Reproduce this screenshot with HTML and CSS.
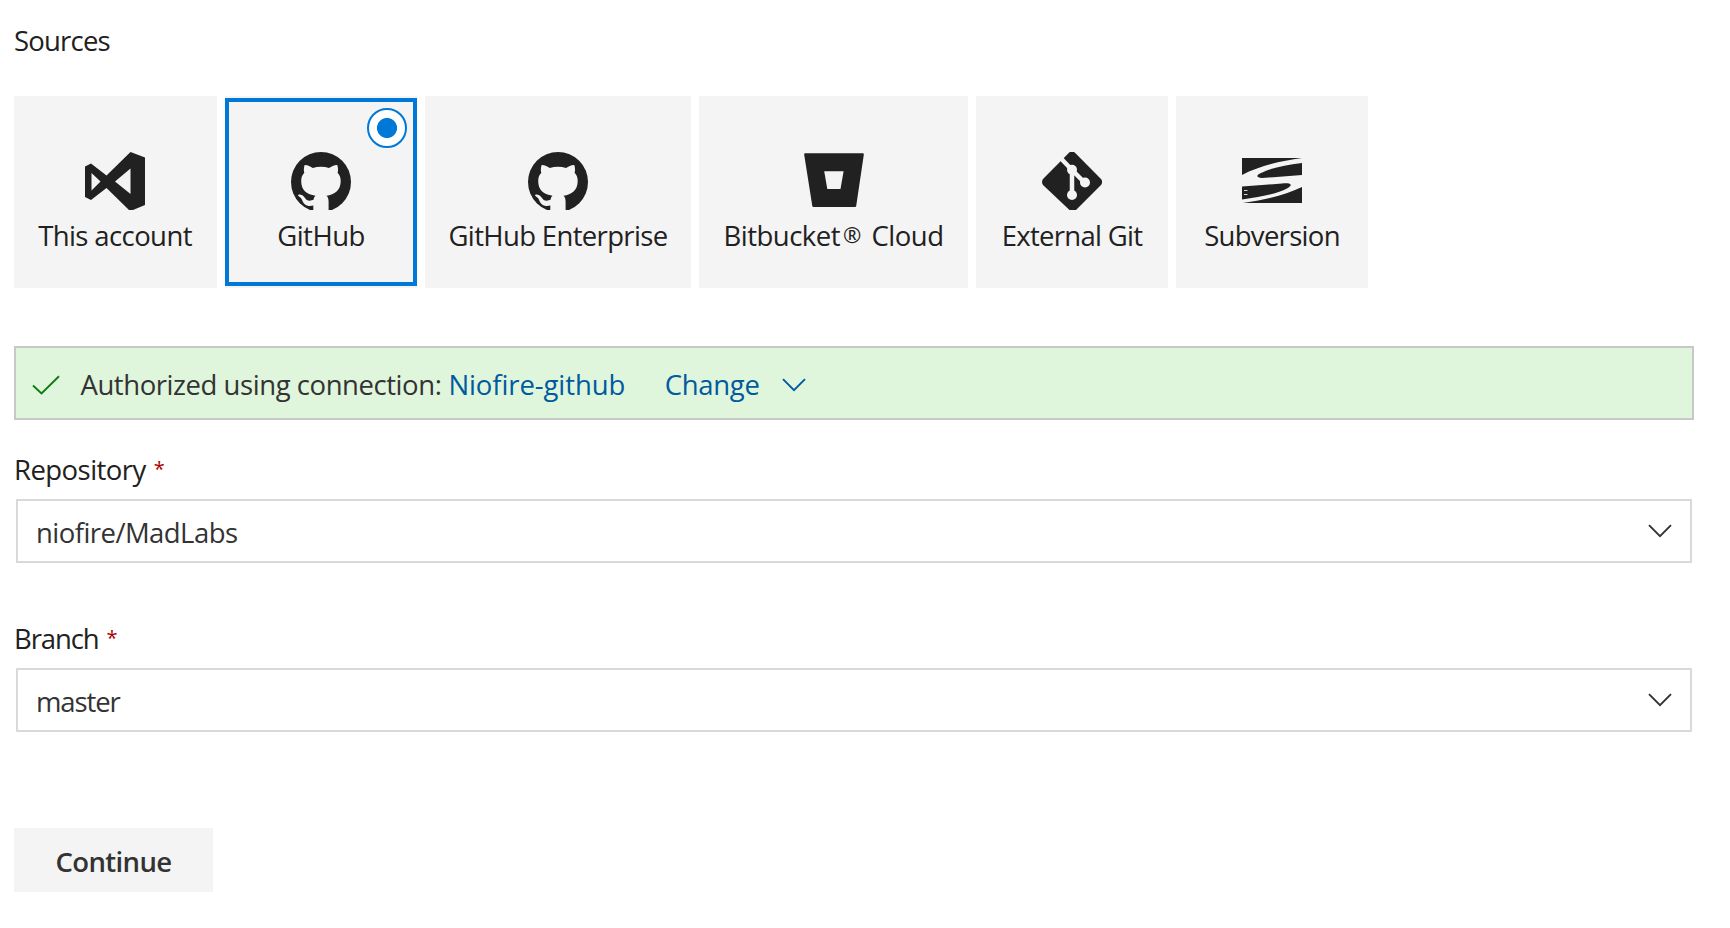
FILE: index.html
```
<!DOCTYPE html>
<html lang="en">
<head>
<meta charset="utf-8">
<title>Sources</title>
<link rel="stylesheet" href="styles.css">
</head>
<body>
<svg class="defs" width="0" height="0">
  <symbol id="mark-github" viewBox="0 0 60 58">
    <circle cx="30" cy="30" r="30" fill="currentColor"/>
    <path class="cutout" d="M22.3 60V53.6C16 55 13 52.500 11.500 49C10.500 46.500 9.500 45.500 7.800 44.300C6.400 43.200 7 42.400 8.800 42.400C11.500 42.600 13 44.300 14.200 46.200C16.300 49.300 19.500 49 22.500 47.800C22.800 45.800 23.500 44.500 24.500 43.700C16 42.500 10.200 38.500 10.200 29C10.200 25.500 11.300 23 13.300 20.800C12.700 19 12.600 16.300 13.600 12.900C16.500 12.700 19.500 14.500 21.800 15.900C27 14.400 33 14.400 38 15.900C40.500 14.300 43.500 12.700 46.300 12.900C47.300 16 47.200 19 46.600 20.800C48.600 23 49.700 25.500 49.700 29C49.700 38.500 43.500 42.600 35.500 43.700C36.900 45 37.600 46.800 37.600 49.500V60Z"/>
  </symbol>
  <symbol id="chevron" viewBox="0 0 24 14">
    <path d="M1 1.200L12 12.200L23 1.200" fill="none" stroke="currentColor" stroke-width="1.900"/>
  </symbol>
</svg>
<main class="page">
  <h1 class="heading"><span class="t">Sources</span></h1>
  <div class="tiles">
    <div class="tile tile-account">
      <svg class="icon" viewBox="0 0 60 58"><path fill="currentColor" fill-rule="evenodd" d="M45.500 0L60 5.500V53L48 58H44L21.500 36L6 48L0 45V14.500L6 11.500L21.500 23.500ZM45.500 16.500L30 29.500L45.500 42ZM6.500 21V38.500L15.500 29.500Z"/></svg>
      <span class="t">This account</span>
    </div>
    <div class="tile tile-github selected">
      <span class="radio"></span>
      <svg class="icon"><use href="#mark-github"/></svg>
      <span class="t">GitHub</span>
    </div>
    <div class="tile tile-enterprise">
      <svg class="icon"><use href="#mark-github"/></svg>
      <span class="t">GitHub Enterprise</span>
    </div>
    <div class="tile tile-bitbucket">
      <svg class="icon" viewBox="0 0 60 58"><path fill="currentColor" fill-rule="evenodd" d="M1.200 1.300H58.800Q60 1.300 59.800 2.700L52.200 54Q52 55 51 55H9.500Q8.500 55 8.300 54L.2 2.700Q0 1.300 1.200 1.300ZM20.200 19.300L23.300 37H36.500L39.600 19.300Z"/></svg>
      <span class="t">Bitbucket<span class="reg">®</span> Cloud</span>
    </div>
    <div class="tile tile-git">
      <svg class="icon" viewBox="0 0 60 58"><path fill="currentColor" d="M27 .8Q30-1.800 33 .8L59 27Q61.200 30 59 33L34.500 57.500Q34 58 33 58H27.500L1 33Q-1 30 1 27Z"/><g class="lines"><path d="M19 6.500L30 18L43 31M30 18V43"/></g><g class="cutout"><circle cx="30" cy="17.800" r="5"/><circle cx="43" cy="30.500" r="5"/><circle cx="30" cy="43" r="5"/></g></svg>
      <span class="t">External Git</span>
    </div>
    <div class="tile tile-svn">
      <svg class="icon" viewBox="0 0 60 58"><path fill="currentColor" d="M0 6H60C38 9 17 14 0 23ZM60 11V23L20 26C14 26 14 23 19 21C28 16.500 42 13 60 11ZM0 34.500L40 31.500C50 30.500 51 33 45 36.500C35 42 18 45 0 47.500ZM1 51C25 47.500 43 43 60 35V51Z"/><path d="M2 38.500H5.500M2 42.500H5.500" stroke="#d8d3cb"/></svg>
      <span class="t">Subversion</span>
    </div>
  </div>
  <div class="notice">
    <svg class="check" viewBox="0 0 28 20"><path d="M1 10.500L9.500 18.500L27 1.200" fill="none" stroke="currentColor" stroke-width="1.900"/></svg>
    <span class="t notice-text">Authorized using connection:</span>
    <a class="t link connection">Niofire-github</a>
    <a class="t link change">Change</a>
    <svg class="chev link"><use href="#chevron"/></svg>
  </div>
  <div class="field">
    <div class="label"><span class="t">Repository</span><span class="star">*</span></div>
    <div class="select"><span class="t value">niofire/MadLabs</span><svg class="chev"><use href="#chevron"/></svg></div>
  </div>
  <div class="field branch">
    <div class="label"><span class="t">Branch</span><span class="star">*</span></div>
    <div class="select"><span class="t value">master</span><svg class="chev"><use href="#chevron"/></svg></div>
  </div>
  <button class="continue"><span class="t">Continue</span></button>
</main>
</body>
</html>
```
FILE: styles.css
```
* { box-sizing: border-box; }
body { margin: 0; background: #fff; color: #212121; font: 27.5px/38px "Open Sans", "Noto Sans", sans-serif; }
.defs { display: block; position: absolute; }
.page { padding: 22px 36px 0 14px; }
.heading { margin: 0; font-size: inherit; font-weight: 400; height: 74px; letter-spacing: -.8px; }
.t { white-space: nowrap; display: inline-block; }
.tiles { display: flex; gap: 8px; height: 192px; }
.tile { position: relative; background: #f4f4f4; display: flex; flex-direction: column; align-items: center; padding-top: 56px; width: 192px; }
.tile .t { margin-top: 7px; letter-spacing: -.6px; }
.tile-account { width: 203px; padding-right: 1px; }
.tile-github .t { letter-spacing: -.5px; }
.tile-enterprise { width: 266px; }
.tile-enterprise .t { letter-spacing: -.65px; }
.tile-bitbucket { width: 269px; }
.tile-bitbucket .t { letter-spacing: -.5px; }
.tile-git .t, .tile-svn .t { letter-spacing: -.7px; }
.selected::after { content: ""; position: absolute; inset: 2px 0; border: 4px solid #0078d7; }
.radio { position: absolute; top: 12px; right: 10px; width: 40px; height: 40px; border: 2px solid #0078d7; border-radius: 50%; background: radial-gradient(circle, #0078d7 9.600px, #fff 10.400px); }
.icon { width: 60px; height: 58px; flex: none; display: block; }
.cutout { fill: #f4f4f4; }
.lines { fill: none; stroke: #f4f4f4; stroke-width: 4.500; }
.reg { font-size: 22px; line-height: 1; vertical-align: 3px; margin: 0 4px 0 3px; }
.notice { margin-top: 58px; height: 74px; border: 2px solid #c8c8c8; background: #dff6dd; color: #333; display: flex; align-items: center; padding-left: 16px; }
.notice .t { padding-top: 4px; }
.check { width: 28px; height: 20px; color: #107c10; margin: 4px 20.5px 0 0; }
.notice-text { letter-spacing: -.44px; }
.link { color: #005a9e; }
.connection { margin-left: 7px; letter-spacing: -.1px; }
.change { margin-left: 39.5px; letter-spacing: -.3px; }
.chev { width: 24px; height: 14px; display: block; }
.notice .chev { margin: 4px 0 0 22px; }
.field { margin-top: 31px; height: 138px; letter-spacing: -.55px; }
.branch { letter-spacing: -1.1px; }
.label { height: 48px; display: flex; }
.star { color: #a80000; margin-left: 8px; font-size: 20px; line-height: 35px; }
.select { margin: 0 2px; height: 64px; border: 2px solid #d9d9d9; display: flex; align-items: center; justify-content: space-between; padding: 0 18px; color: #333; }
.value { padding-top: 4px; }
.continue { display: block; margin-top: 70px; width: 199px; height: 64px; border: 0; padding: 4px 0 0; background: #f4f4f4; font: inherit; font-weight: 600; color: #333; letter-spacing: -.6px; }
```
